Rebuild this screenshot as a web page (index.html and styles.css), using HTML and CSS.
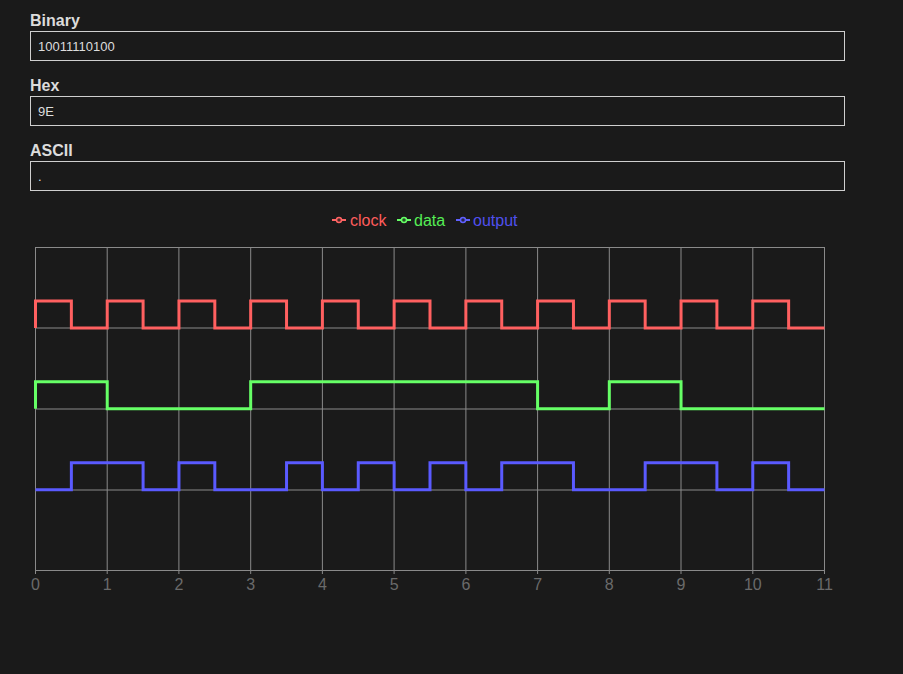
FILE: index.html
```
<!DOCTYPE html>
<html>
<head>
<meta charset="utf-8">
<link rel="stylesheet" href="styles.css">
</head>
<body>
<div class="form">
  <div class="field">
    <label class="label">Binary</label>
    <div class="box">10011110100</div>
  </div>
  <div class="field">
    <label class="label">Hex</label>
    <div class="box">9E</div>
  </div>
  <div class="field">
    <label class="label">ASCII</label>
    <div class="box">.</div>
  </div>
</div>
<svg class="chart" width="903" height="410" viewBox="0 195 903 410" xmlns="http://www.w3.org/2000/svg">
  <g class="legend">
    <line x1="332" y1="220" x2="346" y2="220" stroke="#ff6464" stroke-width="2"/>
    <circle cx="339" cy="220" r="2.5" fill="#4a2626" stroke="#ff6464" stroke-width="1.5"/>
    <text x="350" y="225.5" fill="#ff5c5c">clock</text>
    <line x1="397" y1="220" x2="411" y2="220" stroke="#66ff66" stroke-width="2"/>
    <circle cx="404" cy="220" r="2.5" fill="#264a26" stroke="#66ff66" stroke-width="1.5"/>
    <text x="414" y="225.5" fill="#55ee55">data</text>
    <line x1="456" y1="220" x2="470" y2="220" stroke="#6060ff" stroke-width="2"/>
    <circle cx="463" cy="220" r="2.5" fill="#26264a" stroke="#6060ff" stroke-width="1.5"/>
    <text x="473" y="225.5" fill="#5050ee">output</text>
  </g>
  <g class="grid" stroke="#8a8a8a" stroke-width="1">
    <line x1="35.5" y1="247" x2="35.5" y2="574"/>
    <line x1="107.2" y1="247" x2="107.2" y2="574"/>
    <line x1="178.9" y1="247" x2="178.9" y2="574"/>
    <line x1="250.7" y1="247" x2="250.7" y2="574"/>
    <line x1="322.4" y1="247" x2="322.4" y2="574"/>
    <line x1="394.1" y1="247" x2="394.1" y2="574"/>
    <line x1="465.9" y1="247" x2="465.9" y2="574"/>
    <line x1="537.6" y1="247" x2="537.6" y2="574"/>
    <line x1="609.3" y1="247" x2="609.3" y2="574"/>
    <line x1="681" y1="247" x2="681" y2="574"/>
    <line x1="752.8" y1="247" x2="752.8" y2="574"/>
    <line x1="824.5" y1="247" x2="824.5" y2="574"/>
    <line x1="35" y1="247.5" x2="825" y2="247.5"/>
    <line x1="35" y1="328" x2="825" y2="328"/>
    <line x1="35" y1="409" x2="825" y2="409"/>
    <line x1="35" y1="490" x2="825" y2="490"/>
    <line x1="35" y1="570.5" x2="825" y2="570.5"/>
  </g>
  <g class="ticks" fill="#6a6a6a" text-anchor="middle">
    <text x="35.5" y="590">0</text>
    <text x="107.2" y="590">1</text>
    <text x="178.9" y="590">2</text>
    <text x="250.7" y="590">3</text>
    <text x="322.4" y="590">4</text>
    <text x="394.1" y="590">5</text>
    <text x="465.9" y="590">6</text>
    <text x="537.6" y="590">7</text>
    <text x="609.3" y="590">8</text>
    <text x="681" y="590">9</text>
    <text x="752.8" y="590">10</text>
    <text x="824.5" y="590">11</text>
  </g>
  <g transform="translate(35.5,570.5) scale(71.727,-80.875)" fill="none" stroke-width="3" stroke-linejoin="miter">
    <path vector-effect="non-scaling-stroke" stroke="#ff6060" d="M0 3 V3.333 H0.5 V3 H1 V3.333 H1.5 V3 H2 V3.333 H2.5 V3 H3 V3.333 H3.5 V3 H4 V3.333 H4.5 V3 H5 V3.333 H5.5 V3 H6 V3.333 H6.5 V3 H7 V3.333 H7.5 V3 H8 V3.333 H8.5 V3 H9 V3.333 H9.5 V3 H10 V3.333 H10.5 V3 H11"/>
    <path vector-effect="non-scaling-stroke" stroke="#66ff66" d="M0 2 V2.333 H1 V2 H3 V2.333 H7 V2 H8 V2.333 H9 V2 H11"/>
    <path vector-effect="non-scaling-stroke" stroke="#5a5aff" d="M0 1 H0.5 V1.333 H1.5 V1 H2 V1.333 H2.5 V1 H3.5 V1.333 H4 V1 H4.5 V1.333 H5 V1 H5.5 V1.333 H6 V1 H6.5 V1.333 H7.5 V1 H8.5 V1.333 H9.5 V1 H10 V1.333 H10.5 V1 H11"/>
  </g>
</svg>
</body>
</html>
```
FILE: styles.css
```
html, body {
  margin: 0;
  padding: 0;
  background: #1a1a1a;
}
body {
  font-family: "Liberation Sans", Arial, sans-serif;
  color: #dddddd;
}
.form {
  width: 815px;
  margin-left: 30px;
  padding-top: 12px;
  display: flex;
  flex-direction: column;
  gap: 16px;
}
.field {
  display: flex;
  flex-direction: column;
  gap: 1px;
}
.label {
  font-weight: bold;
  font-size: 16px;
  line-height: 18px;
  color: #dcdcdc;
}
.box {
  box-sizing: border-box;
  height: 30px;
  border: 1px solid #cfcfcf;
  padding: 0 7px;
  font-size: 13px;
  line-height: 29px;
  color: #dddddd;
}
.chart {
  display: block;
  margin-top: 4px;
}
.legend text {
  font-family: "Liberation Sans", Arial, sans-serif;
  font-size: 16px;
}
.ticks text {
  font-family: "Liberation Sans", Arial, sans-serif;
  font-size: 16px;
}
```
